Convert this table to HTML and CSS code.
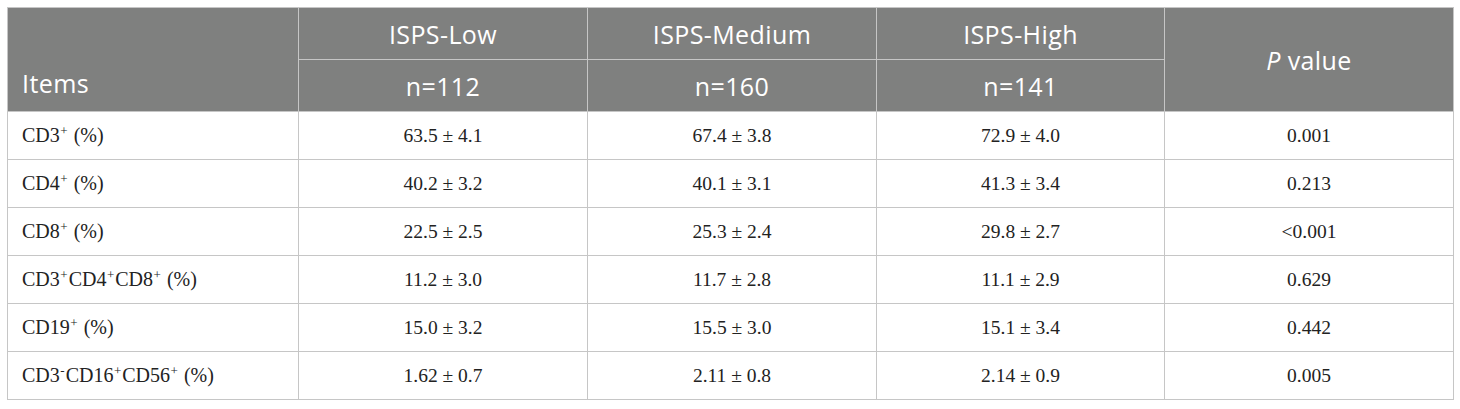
FILE: index.html
```html
<!DOCTYPE html>
<html>
<head>
<meta charset="utf-8">
<link rel="stylesheet" href="styles.css">
</head>
<body>
<table class="data">
  <colgroup>
    <col class="c1"><col class="c2"><col class="c3"><col class="c4"><col class="c5">
  </colgroup>
  <thead>
    <tr class="h1">
      <th rowspan="2" class="items">Items</th>
      <th>ISPS-Low</th>
      <th>ISPS-Medium</th>
      <th>ISPS-High</th>
      <th rowspan="2" class="pv"><i>P</i> value</th>
    </tr>
    <tr class="h2">
      <th>n=112</th>
      <th>n=160</th>
      <th>n=141</th>
    </tr>
  </thead>
  <tbody>
    <tr><td class="lab">CD3<sup>+</sup> (%)</td><td>63.5 ± 4.1</td><td>67.4 ± 3.8</td><td>72.9 ± 4.0</td><td>0.001</td></tr>
    <tr><td class="lab">CD4<sup>+</sup> (%)</td><td>40.2 ± 3.2</td><td>40.1 ± 3.1</td><td>41.3 ± 3.4</td><td>0.213</td></tr>
    <tr><td class="lab">CD8<sup>+</sup> (%)</td><td>22.5 ± 2.5</td><td>25.3 ± 2.4</td><td>29.8 ± 2.7</td><td>&lt;0.001</td></tr>
    <tr><td class="lab">CD3<sup>+</sup>CD4<sup>+</sup>CD8<sup>+</sup> (%)</td><td>11.2 ± 3.0</td><td>11.7 ± 2.8</td><td>11.1 ± 2.9</td><td>0.629</td></tr>
    <tr><td class="lab">CD19<sup>+</sup> (%)</td><td>15.0 ± 3.2</td><td>15.5 ± 3.0</td><td>15.1 ± 3.4</td><td>0.442</td></tr>
    <tr><td class="lab">CD3<sup>-</sup>CD16<sup>+</sup>CD56<sup>+</sup> (%)</td><td>1.62 ± 0.7</td><td>2.11 ± 0.8</td><td>2.14 ± 0.9</td><td>0.005</td></tr>
  </tbody>
</table>
</body>
</html>
```
FILE: styles.css
```css
html, body {
  margin: 0;
  padding: 0;
  background: #ffffff;
}
body {
  padding: 7px 0 0 7px;
}
.data {
  border-collapse: collapse;
  width: 1446px;
  table-layout: fixed;
  border: 1px solid #c6c6c6;
}
.c1 { width: 291px; }
.c2 { width: 289px; }
.c3 { width: 289px; }
.c4 { width: 288px; }
.c5 { width: 289px; }
.data th {
  background: #7f807f;
  color: #ffffff;
  font-family: "Open Sans", "Noto Sans", sans-serif;
  font-weight: 400;
  font-size: 25px;
  letter-spacing: 0.4px;
  height: 51px;
  padding: 0;
  border: 1px solid #c6c6c6;
  text-align: center;
  vertical-align: middle;
}
.data th.items {
  text-align: left;
  vertical-align: bottom;
  padding: 0 0 11px 14px;
}
.data td {
  font-family: "Liberation Serif", "Times New Roman", serif;
  font-size: 19.5px;
  color: #222222;
  height: 47px;
  padding: 0;
  border: 1px solid #c6c6c6;
  text-align: center;
  vertical-align: middle;
}
.data td.lab {
  text-align: left;
  padding-left: 14px;
  font-size: 20px;
}
sup {
  font-size: 0.65em;
  line-height: 0;
  vertical-align: 0.55em;
  padding: 0 1px 0 0.5px;
}
```
